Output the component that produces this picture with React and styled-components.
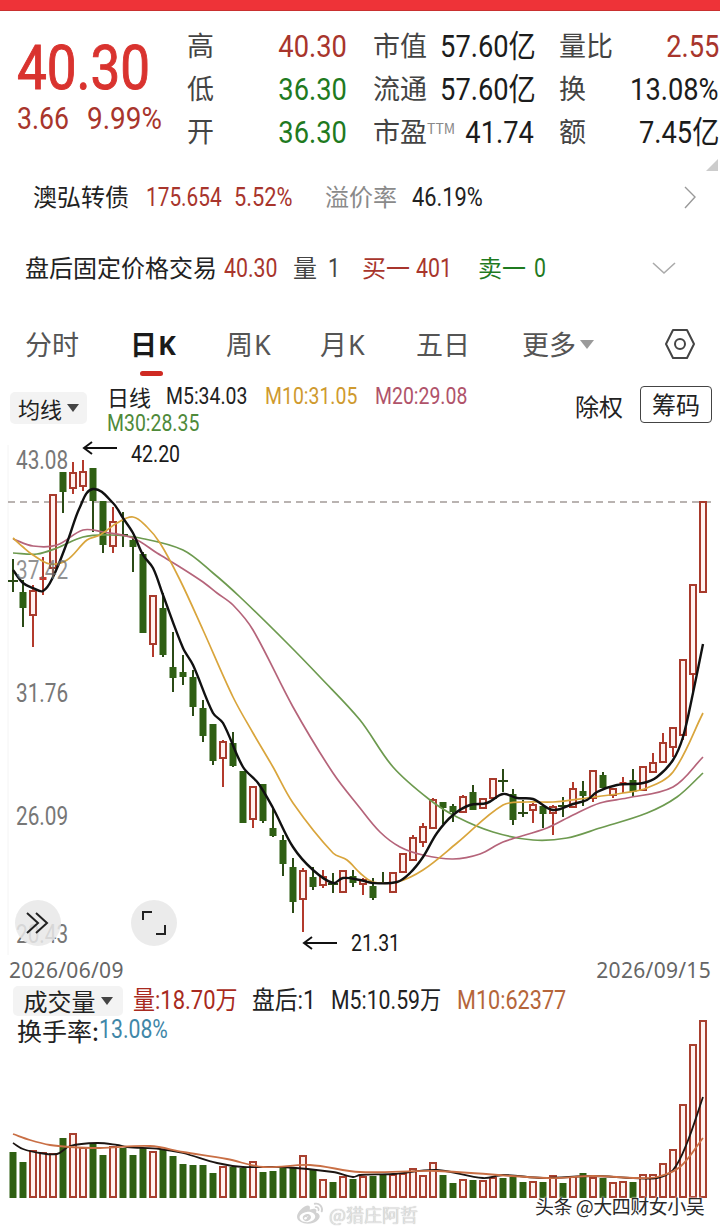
import React from "react";
import styled, { createGlobalStyle } from "styled-components";
import { FaWeibo } from "react-icons/fa";

const RED = "#a8352c";
const GREEN = "#1f7a1f";
const NUM = 'Roboto, "Noto Sans CJK SC", sans-serif';

const GlobalStyle = createGlobalStyle`
  html, body {
    margin: 0;
    padding: 0;
    background: #fff;
  }
  body {
    font-family: "Noto Sans CJK SC", "Noto Sans", sans-serif;
    color: #222;
  }
`;

const Page = styled.div`
  width: 720px;
  height: 1232px;
  overflow: hidden;
  position: relative;
  background: #fff;
`;

const RedBar = styled.div`
  height: 11px;
  background: #ee3338;
  border-bottom: 1px solid #c9302f;
  box-sizing: border-box;
`;

// 截图里的数字是窄体，没有这种字体，用 Roboto 横向压缩；$w 是压缩后占的宽度
const Squeezed = styled.span`
  display: inline-block;
  flex: none;
  white-space: nowrap;
  font-family: ${NUM};
  font-size: ${(p) => p.$size}px;
  line-height: 1.1;
  color: ${(p) => p.$color || "#222"};
  width: ${(p) => p.$w / p.$x}px;
  margin-right: ${(p) => p.$w - p.$w / p.$x + (p.$gap || 0)}px;
  transform: scaleX(${(p) => p.$x});
  transform-origin: left center;
`;

const QuoteHeader = styled.div`
  position: relative;
  height: 154px;
  display: flex;
  box-sizing: border-box;
  padding-top: 14px;
`;

const PriceBlock = styled.div`
  width: 187px;
  padding-left: 17px;
  box-sizing: border-box;
`;

const BigPrice = styled(Squeezed)`
  display: block;
  line-height: 64px;
  margin-top: 11px;
  -webkit-text-stroke: 1px #d9332f;
`;

const ChangeRow = styled.div`
  display: flex;
  margin-top: 2px;
  line-height: 34px;
`;

const StatGrid = styled.div`
  width: 533px;
  display: grid;
  grid-template-columns: 160px 26px 161px 25px 160px;
  grid-auto-rows: 43px;
  align-items: center;
`;

const StatLabel = styled.span`
  font-size: 27px;
  line-height: 40px;
  margin-bottom: 3px;
  color: #444;
  white-space: nowrap;
`;

const StatCell = styled.div`
  display: flex;
  justify-content: space-between;
  align-items: center;
`;

const StatValue = styled.span`
  font-family: ${NUM};
  font-size: 31px;
  line-height: 43px;
  color: ${(p) => p.$color || "#1c1c1c"};
  white-space: nowrap;
  transform: scaleX(0.88);
  transform-origin: right center;
`;

const Ttm = styled.sup`
  font-size: 14px;
  line-height: 0;
  color: #888;
  vertical-align: 8px;
`;

const CornerMark = styled.div`
  position: absolute;
  right: 2px;
  bottom: -6px;
  width: 0;
  height: 0;
  border-left: 12px solid transparent;
  border-bottom: 12px solid #ccc;
`;

const InfoRow = styled.div`
  height: ${(p) => p.$h}px;
  display: flex;
  align-items: center;
  padding-left: ${(p) => p.$left}px;
  position: relative;
  box-sizing: border-box;
  white-space: nowrap;
`;

const InfoLabel = styled.span`
  font-size: 24px;
  line-height: 30px;
  margin-bottom: 2px;
  color: ${(p) => p.$color || "#222"};
  margin-right: ${(p) => p.$gap || 0}px;
`;

const RowIcon = styled.svg`
  position: absolute;
  right: ${(p) => p.$right}px;
  top: 50%;
  transform: translateY(-50%);
`;

const Tabs = styled.div`
  height: 64px;
  position: relative;
  margin-top: 5px;
  display: grid;
  grid-template-columns: 105px 96px 94px 96px 106px 1fr;
  padding-left: 25px;
  align-items: center;
  box-sizing: border-box;
`;

const Tab = styled.div`
  position: relative;
  font-size: 27px;
  line-height: 48px;
  color: ${(p) => (p.$active ? "#1a1a1a" : "#555")};
  font-weight: ${(p) => (p.$active ? 700 : 400)};
  display: flex;
  align-items: center;
  gap: 4px;
`;

const TabLatin = styled.span`
  font-family: "Noto Sans", sans-serif;
  font-weight: inherit;
  font-size: 27px;
  margin-left: 1px;
`;

const TabMark = styled.div`
  position: absolute;
  left: 10px;
  bottom: -7px;
  width: 23px;
  height: 5px;
  border-radius: 3px;
  background: #cf2a22;
`;

const Caret = styled.span`
  display: inline-block;
  width: 0;
  height: 0;
  border-left: ${(p) => p.$size}px solid transparent;
  border-right: ${(p) => p.$size}px solid transparent;
  border-top: ${(p) => p.$size * 1.4}px solid ${(p) => p.$color || "#555"};
`;

const HexIcon = styled.svg`
  position: absolute;
  left: 664px;
  top: 15px;
`;

const LegendBar = styled.div`
  height: 58px;
  margin-top: 6px;
  position: relative;
  display: flex;
`;

const Pill = styled.div`
  display: flex;
  align-items: center;
  justify-content: center;
  gap: 5px;
  height: ${(p) => p.$h}px;
  box-sizing: border-box;
  background: #f3f3f3;
  border-radius: 5px;
  font-size: ${(p) => p.$font}px;
  line-height: 1;
  color: #222;
  width: ${(p) => p.$w}px;
  margin-left: ${(p) => p.$left}px;
  margin-right: ${(p) => p.$right || 0}px;
  flex: none;
`;

const LegendPill = styled(Pill)`
  margin-top: 10px;
`;

const LegendText = styled.div`
  margin-left: 20px;
  margin-top: 1px;
  width: 420px;
  display: flex;
  flex-wrap: wrap;
  align-items: center;
  align-content: flex-start;
  row-gap: 0;
`;

const LegendCn = styled.span`
  font-size: 22px;
  color: #222;
  margin-right: 15px;
  line-height: 27px;
`;

const LegendItem = styled(Squeezed)`
  line-height: 27px;
`;

const LegendBreak = styled.div`
  flex-basis: 100%;
  height: 0;
`;

const LegendActions = styled.div`
  position: absolute;
  right: 8px;
  top: 2px;
  display: flex;
  align-items: center;
  gap: 17px;
`;

const ActionText = styled.span`
  font-size: 24px;
  color: #222;
  line-height: 37px;
  margin-top: 3px;
`;

const ActionButton = styled.div`
  width: 72px;
  height: 37px;
  box-sizing: border-box;
  border: 1px solid #444;
  border-radius: 4px;
  font-size: 24px;
  line-height: 34px;
  text-align: center;
  color: #222;
`;

const PriceChart = styled.div`
  position: relative;
  height: 520px;
`;

const ChartSvg = styled.svg`
  display: block;
  width: 720px;
`;

const AxisLabel = styled(Squeezed)`
  position: absolute;
  left: 16px;
  top: ${(p) => p.$top}px;
  line-height: 28px;
`;

const PriceTag = styled(Squeezed)`
  position: absolute;
  left: ${(p) => p.$left}px;
  top: ${(p) => p.$top}px;
  line-height: 26px;
`;

const RoundButton = styled.div`
  position: absolute;
  left: ${(p) => p.$left}px;
  top: 460px;
  width: 46px;
  height: 46px;
  border-radius: 50%;
  background: rgba(232, 232, 232, 0.85);
  display: flex;
  align-items: center;
  justify-content: center;
`;

const DateRow = styled.div`
  height: 26px;
  margin-top: -3px;
  padding: 0 9px;
  display: flex;
  justify-content: space-between;
  font-family: "Noto Sans", sans-serif;
  font-size: 21px;
  letter-spacing: 0.3px;
  line-height: 26px;
  color: #666;
`;

const VolumeLegend = styled.div`
  height: 32px;
  margin-top: 2px;
  display: flex;
  align-items: center;
  white-space: nowrap;
`;

const TurnoverRow = styled.div`
  height: 26px;
  padding-left: 17px;
  display: flex;
  align-items: center;
  font-size: 25px;
  line-height: 26px;
  color: #222;
  position: relative;
  z-index: 1;
`;

const VolumeChart = styled.div`
  height: 185px;
  margin-top: -28px;
`;

const WatermarkRow = styled.div`
  position: absolute;
  left: 297px;
  top: 1201px;
  display: flex;
  align-items: center;
  gap: 6px;
  font-size: 18px;
  line-height: 24px;
  color: #e4e4e4;
  text-shadow: 0 0 1px #aaa;
`;

const SourceMark = styled.div`
  position: absolute;
  left: 535px;
  top: 1192px;
  font-size: 19px;
  letter-spacing: -0.5px;
  line-height: 28px;
  color: #2a2a2a;
  text-shadow: 0 0 2px #fff, 0 0 2px #fff;
  white-space: nowrap;
`;

// [high, top, bottom, low, kind]  kind: g 实心绿 / r 空心红 / s 实心红 / d 十字
const candles = [
  [559, 580, 581, 592, "d"], [580, 592, 608, 627, "g"], [585, 591, 615, 647, "r"], [557, 577, 580, 595, "s"],
  [495, 495, 568, 577, "r"], [472, 472, 492, 513, "g"], [462, 473, 488, 494, "r"], [460, 472, 486, 491, "r"],
  [468, 468, 501, 532, "g"], [501, 501, 545, 553, "g"], [507, 522, 546, 553, "r"], [512, 534, 536, 547, "d"],
  [536, 540, 547, 572, "g"], [552, 554, 633, 633, "g"], [596, 596, 644, 657, "r"], [593, 608, 655, 657, "g"],
  [632, 667, 678, 692, "g"], [655, 672, 677, 685, "g"], [670, 677, 707, 716, "g"], [700, 708, 736, 742, "g"],
  [724, 724, 761, 765, "g"], [740, 742, 758, 787, "r"], [732, 743, 766, 767, "g"], [771, 771, 823, 823, "g"],
  [786, 787, 819, 828, "r"], [784, 784, 821, 823, "g"], [808, 828, 836, 837, "g"], [835, 840, 864, 876, "g"],
  [858, 867, 902, 913, "g"], [868, 871, 899, 932, "r"], [867, 877, 887, 890, "g"], [870, 877, 885, 888, "r"],
  [873, 883, 884, 893, "d"], [871, 871, 892, 892, "r"], [870, 876, 883, 887, "g"], [878, 880, 884, 895, "r"],
  [878, 886, 898, 900, "g"], [872, 882, 883, 884, "d"], [873, 873, 892, 892, "r"], [854, 854, 872, 872, "r"],
  [835, 838, 860, 860, "r"], [823, 827, 842, 847, "r"], [798, 800, 828, 828, "r"], [802, 802, 808, 824, "g"],
  [804, 806, 812, 822, "g"], [795, 797, 812, 812, "r"], [785, 792, 810, 810, "g"], [799, 799, 808, 808, "r"],
  [778, 779, 798, 798, "r"], [769, 780, 781, 792, "d"], [789, 794, 820, 825, "g"], [800, 812, 813, 817, "d"],
  [803, 805, 810, 823, "r"], [806, 806, 814, 828, "g"], [805, 807, 813, 835, "r"], [797, 805, 806, 817, "d"],
  [782, 789, 807, 807, "r"], [781, 791, 796, 806, "g"], [771, 771, 798, 802, "r"], [772, 775, 788, 788, "g"],
  [789, 789, 795, 798, "r"], [777, 782, 784, 793, "s"], [769, 780, 792, 797, "g"], [767, 767, 790, 790, "r"],
  [753, 763, 772, 772, "r"], [733, 743, 762, 762, "r"], [727, 728, 747, 757, "r"], [660, 660, 735, 740, "r"],
  [585, 585, 674, 693, "r"], [502, 502, 592, 592, "r"],
];

// [top, kind]
const volumes = [
  [1152, "g"], [1162, "g"], [1151, "r"], [1153, "r"], [1154, "r"], [1138, "g"], [1134, "r"], [1148, "r"], [1143, "g"], [1155, "g"],
  [1147, "r"], [1148, "g"], [1155, "g"], [1148, "g"], [1152, "r"], [1150, "g"], [1156, "g"], [1164, "g"], [1165, "g"], [1165, "g"],
  [1173, "g"], [1167, "r"], [1167, "g"], [1168, "g"], [1162, "r"], [1172, "g"], [1171, "g"], [1166, "g"], [1167, "g"], [1156, "r"],
  [1170, "g"], [1180, "r"], [1182, "g"], [1177, "r"], [1179, "g"], [1177, "r"], [1176, "g"], [1174, "g"], [1175, "r"], [1174, "r"],
  [1169, "r"], [1176, "r"], [1163, "r"], [1175, "g"], [1183, "g"], [1180, "r"], [1180, "g"], [1181, "r"], [1178, "r"], [1178, "g"],
  [1177, "g"], [1182, "g"], [1182, "r"], [1182, "g"], [1176, "r"], [1183, "g"], [1177, "r"], [1173, "g"], [1178, "r"], [1178, "g"],
  [1183, "r"], [1182, "r"], [1182, "g"], [1175, "r"], [1175, "r"], [1164, "r"], [1150, "r"], [1105, "r"], [1045, "r"], [1021, "r"],
];

const maLines = [
  {
    color: "#6d9a4f",
    pts: "13,553 37,554 57,548 83,537 110,535 140,538 183,550 213,573 240,597 287,643 320,677 360,720 393,767 430,800 457,817 493,832 533,840 567,838 600,828 647,813 677,797 703,773",
  },
  {
    color: "#b5647a",
    pts: "13,539 33,546 57,545 83,530 103,532 133,538 157,553 180,567 203,582 217,593 233,605 253,630 293,707 333,773 360,808 380,832 400,847 423,855 453,859 480,854 503,842 547,828 573,815 600,803 627,798 673,787 703,757",
  },
  {
    color: "#d9a53c",
    pts: "13,538 23,547 33,555 50,564 67,560 87,540 100,535 117,523 133,517 147,527 160,543 180,580 203,630 233,697 253,733 273,767 293,803 333,853 347,860 360,873 373,882 397,882 423,870 457,843 503,805 527,802 553,802 587,798 623,793 647,788 673,772 703,713",
  },
  {
    color: "#111",
    width: 2.4,
    pts: "13,570 23,583 33,588 43,591 53,577 68,540 80,507 93,489 113,503 123,518 133,533 143,555 153,568 163,595 183,648 193,665 213,713 223,723 243,767 258,783 273,808 293,847 313,870 333,883 343,878 360,880 373,883 397,882 410,873 423,857 437,833 453,815 470,805 487,803 503,794 517,798 533,799 553,810 573,804 587,800 597,792 617,785 643,783 657,777 673,760 683,737 693,693 703,644",
  },
];

const volLines = [
  {
    color: "#1c1512",
    pts: "13,1143 23,1149 40,1153 57,1154 70,1146 97,1143 117,1145 127,1147 160,1149 183,1153 217,1163 243,1167 283,1167 333,1172 353,1177 360,1175 393,1174 437,1170 483,1178 503,1175 543,1178 593,1176 633,1178 657,1178 673,1170 687,1143 703,1097",
  },
  {
    color: "#c96f45",
    pts: "13,1134 30,1140 50,1145 70,1147 100,1148 150,1146 183,1152 227,1159 263,1167 310,1165 360,1172 437,1171 547,1178 593,1176 637,1178 657,1177 680,1167 703,1138",
  },
];

// 折线点转平滑曲线：切线取前后点方向，手柄长度按当前线段的 1/3，点距不均也不会过冲
function smoothPath(pts) {
  const p = pts.split(" ").map((s) => s.split(",").map(Number));
  const tangent = (i) => {
    const a = p[i - 1] || p[i];
    const c = p[i + 1] || p[i];
    const len = Math.hypot(c[0] - a[0], c[1] - a[1]) || 1;
    return [(c[0] - a[0]) / len, (c[1] - a[1]) / len];
  };
  let d = `M${p[0][0]} ${p[0][1]}`;
  for (let i = 0; i < p.length - 1; i++) {
    const b = p[i];
    const c = p[i + 1];
    const h = Math.hypot(c[0] - b[0], c[1] - b[1]) / 3;
    const t0 = tangent(i);
    const t1 = tangent(i + 1);
    d += ` C${b[0] + t0[0] * h} ${b[1] + t0[1] * h} ${c[0] - t1[0] * h} ${c[1] - t1[1] * h} ${c[0]} ${c[1]}`;
  }
  return d;
}

function Candle({ index, data }) {
  const x = 13 + index * 10;
  const [high, top, bottom, low, kind] = data;
  const isRed = kind === "r" || kind === "s";
  const wick = isRed ? "#b33a2c" : "#2b4a16";
  return (
    <g>
      <line x1={x} x2={x} y1={high} y2={low} stroke={wick} strokeWidth="2" />
      {kind === "d" && <rect x={x - 5} y={top} width="10" height="2" fill={wick} />}
      {kind === "g" && <rect x={x - 3.5} y={top} width="7" height={bottom - top} fill="#2f5f14" />}
      {kind === "s" && <rect x={x - 3.5} y={top} width="7" height={bottom - top} fill="#c9372c" />}
      {kind === "r" && (
        <rect x={x - 3} y={top} width="6" height={bottom - top} fill="#fff1ef" stroke="#a83a2c" strokeWidth="2" />
      )}
    </g>
  );
}

function VolumeBar({ index, data }) {
  const x = 13 + index * 10;
  const [top, kind] = data;
  if (kind === "g") return <rect x={x - 3.5} y={top} width="7" height={1198 - top} fill="#2f6012" />;
  return <rect x={x - 3} y={top} width="6" height={1197 - top} fill="#fff2ef" stroke="#a8402f" strokeWidth="2" />;
}

function Chevron({ dir }) {
  if (dir === "right") {
    return (
      <RowIcon $right={23} width="14" height="24" viewBox="0 0 14 24">
        <path d="M2 2 L12 12 L2 23" fill="none" stroke="#999" strokeWidth="1.4" />
      </RowIcon>
    );
  }
  return (
    <RowIcon $right={44} width="24" height="14" viewBox="0 0 24 14">
      <path d="M1 2 L12 12 L23 2" fill="none" stroke="#aaa" strokeWidth="1.6" />
    </RowIcon>
  );
}

export default function App() {
  return (
    <Page>
      <GlobalStyle />
      <RedBar />
      <QuoteHeader>
        <PriceBlock>
          <BigPrice $size={62} $w={133} $x={0.855} $color="#d9332f">40.30</BigPrice>
          <ChangeRow>
            <Squeezed $size={31} $w={52} $x={0.86} $gap={18} $color={RED}>3.66</Squeezed>
            <Squeezed $size={31} $w={75} $x={0.9} $color={RED}>9.99%</Squeezed>
          </ChangeRow>
        </PriceBlock>
        <StatGrid>
          <StatCell>
            <StatLabel>高</StatLabel>
            <StatValue $color={RED}>40.30</StatValue>
          </StatCell>
          <span />
          <StatCell>
            <StatLabel>市值</StatLabel>
            <StatValue>57.60亿</StatValue>
          </StatCell>
          <span />
          <StatCell>
            <StatLabel>量比</StatLabel>
            <StatValue $color={RED}>2.55</StatValue>
          </StatCell>
          <StatCell>
            <StatLabel>低</StatLabel>
            <StatValue $color={GREEN}>36.30</StatValue>
          </StatCell>
          <span />
          <StatCell>
            <StatLabel>流通</StatLabel>
            <StatValue>57.60亿</StatValue>
          </StatCell>
          <span />
          <StatCell>
            <StatLabel>换</StatLabel>
            <StatValue>13.08%</StatValue>
          </StatCell>
          <StatCell>
            <StatLabel>开</StatLabel>
            <StatValue $color={GREEN}>36.30</StatValue>
          </StatCell>
          <span />
          <StatCell>
            <StatLabel>
              市盈<Ttm>TTM</Ttm>
            </StatLabel>
            <StatValue>41.74</StatValue>
          </StatCell>
          <span />
          <StatCell>
            <StatLabel>额</StatLabel>
            <StatValue>7.45亿</StatValue>
          </StatCell>
        </StatGrid>
        <CornerMark />
      </QuoteHeader>

      <InfoRow $h={64} $left={33}>
        <InfoLabel $gap={17}>澳弘转债</InfoLabel>
        <Squeezed $size={26} $w={75} $x={0.8} $gap={13} $color={RED}>175.654</Squeezed>
        <Squeezed $size={26} $w={58} $x={0.84} $gap={33} $color={RED}>5.52%</Squeezed>
        <InfoLabel $color="#8a8a8a" $gap={15}>溢价率</InfoLabel>
        <Squeezed $size={26} $w={71} $x={0.84}>46.19%</Squeezed>
        <Chevron dir="right" />
      </InfoRow>

      <InfoRow $h={78} $left={25}>
        <InfoLabel $gap={7}>盘后固定价格交易</InfoLabel>
        <Squeezed $size={26} $w={53} $x={0.82} $gap={16} $color={RED}>40.30</Squeezed>
        <InfoLabel $color="#444" $gap={11}>量</InfoLabel>
        <Squeezed $size={26} $w={10} $x={0.82} $gap={24} $color="#444">1</Squeezed>
        <InfoLabel $color={RED} $gap={6}>买一</InfoLabel>
        <Squeezed $size={26} $w={37} $x={0.82} $gap={25} $color={RED}>401</Squeezed>
        <InfoLabel $color={GREEN} $gap={8}>卖一</InfoLabel>
        <Squeezed $size={26} $w={11} $x={0.82} $color={GREEN}>0</Squeezed>
        <Chevron dir="down" />
      </InfoRow>

      <Tabs>
        <Tab>分时</Tab>
        <Tab $active>
          <span>
            日<TabLatin>K</TabLatin>
          </span>
          <TabMark />
        </Tab>
        <Tab>
          <span>
            周<TabLatin>K</TabLatin>
          </span>
        </Tab>
        <Tab>
          <span>
            月<TabLatin>K</TabLatin>
          </span>
        </Tab>
        <Tab>五日</Tab>
        <Tab>
          更多
          <Caret $size={7} $color="#9a9a9a" />
        </Tab>
        <HexIcon width="32" height="34" viewBox="0 0 32 34">
          <path d="M9 3 H23 L30 17 L23 31 H9 L2 17 Z" fill="none" stroke="#444" strokeWidth="2" strokeLinejoin="round" />
          <circle cx="16" cy="17" r="5" fill="none" stroke="#444" strokeWidth="2" />
        </HexIcon>
      </Tabs>

      <LegendBar>
        <LegendPill $w={77} $h={32} $left={10} $font={22}>
          均线
          <Caret $size={6} $color="#444" />
        </LegendPill>
        <LegendText>
          <LegendCn>日线</LegendCn>
          <LegendItem $size={23} $w={81} $x={0.845} $gap={18}>M5:34.03</LegendItem>
          <LegendItem $size={23} $w={92} $x={0.845} $gap={18} $color="#cf9a2e">M10:31.05</LegendItem>
          <LegendItem $size={23} $w={93} $x={0.845} $color="#b0536a">M20:29.08</LegendItem>
          <LegendBreak />
          <LegendItem $size={23} $w={91} $x={0.845} $color="#4f8a3a">M30:28.35</LegendItem>
        </LegendText>
        <LegendActions>
          <ActionText>除权</ActionText>
          <ActionButton>筹码</ActionButton>
        </LegendActions>
      </LegendBar>

      <PriceChart>
        <ChartSvg height="520" viewBox="0 440 720 520">
          <line x1="8" x2="8" y1="445" y2="955" stroke="#f4f4f4" strokeWidth="1" />
          <line x1="8" x2="712" y1="502" y2="502" stroke="#a39b98" strokeWidth="1.5" strokeDasharray="7 5" />
          <path d="M117 448 H84 M92 442 L84 448 L92 454" fill="none" stroke="#111" strokeWidth="2" />
          <path d="M337 943 H304 M312 937 L304 943 L312 949" fill="none" stroke="#111" strokeWidth="2" />
          {candles.map((c, i) => (
            <Candle key={i} index={i} data={c} />
          ))}
          {maLines.map((l) => (
            <path key={l.color} d={smoothPath(l.pts)} fill="none" stroke={l.color} strokeWidth={l.width || 1.7} />
          ))}
        </ChartSvg>
        <AxisLabel $size={25} $w={52} $x={0.83} $top={7} $color="#777">43.08</AxisLabel>
        <AxisLabel $size={25} $w={52} $x={0.83} $top={117} $color="rgba(110,110,110,0.75)">37.42</AxisLabel>
        <AxisLabel $size={25} $w={52} $x={0.83} $top={240} $color="#777">31.76</AxisLabel>
        <AxisLabel $size={25} $w={52} $x={0.83} $top={363} $color="#777">26.09</AxisLabel>
        <AxisLabel $size={25} $w={52} $x={0.83} $top={481} $color="#777">20.43</AxisLabel>
        <PriceTag $size={23} $w={49} $x={0.85} $left={131} $top={2} $color="#1a1a1a">42.20</PriceTag>
        <PriceTag $size={23} $w={48} $x={0.85} $left={351} $top={491} $color="#1a1a1a">21.31</PriceTag>
        <RoundButton $left={15}>
          <svg width="26" height="26" viewBox="0 0 26 26">
            <path d="M2 3 L13 13 L2 23 M11 3 L22 13 L11 23" fill="none" stroke="#222" strokeWidth="2" />
          </svg>
        </RoundButton>
        <RoundButton $left={131}>
          <svg width="26" height="26" viewBox="0 0 26 26">
            <path d="M2 10 V2 H11 M24 15 V24 H15" fill="none" stroke="#222" strokeWidth="2" />
          </svg>
        </RoundButton>
      </PriceChart>

      <DateRow>
        <span>2026/06/09</span>
        <span>2026/09/15</span>
      </DateRow>

      <VolumeLegend>
        <Pill $w={110} $h={30} $left={13} $right={10} $font={24}>
          成交量
          <Caret $size={6} $color="#444" />
        </Pill>
        <Squeezed $size={25} $w={104} $x={0.88} $gap={15} $color="#a82a20">量:18.70万</Squeezed>
        <Squeezed $size={25} $w={64} $x={0.91} $gap={15}>盘后:1</Squeezed>
        <Squeezed $size={25} $w={110} $x={0.85} $gap={16}>M5:10.59万</Squeezed>
        <Squeezed $size={25} $w={109} $x={0.865} $color="#b5653a">M10:62377</Squeezed>
      </VolumeLegend>

      <TurnoverRow>
        换手率:
        <Squeezed $size={25} $w={69} $x={0.85} $color="#3f87a8">13.08%</Squeezed>
      </TurnoverRow>

      <VolumeChart>
        <ChartSvg height="185" viewBox="0 1015 720 185">
          {volumes.map((v, i) => (
            <VolumeBar key={i} index={i} data={v} />
          ))}
          {volLines.map((l) => (
            <path key={l.color} d={smoothPath(l.pts)} fill="none" stroke={l.color} strokeWidth="1.8" />
          ))}
        </ChartSvg>
      </VolumeChart>

      <WatermarkRow>
        <FaWeibo size={26} color="#d2d2d2" />
        <span>@猎庄阿哲</span>
      </WatermarkRow>
      <SourceMark>头条 @大四财女小吴</SourceMark>
    </Page>
  );
}
